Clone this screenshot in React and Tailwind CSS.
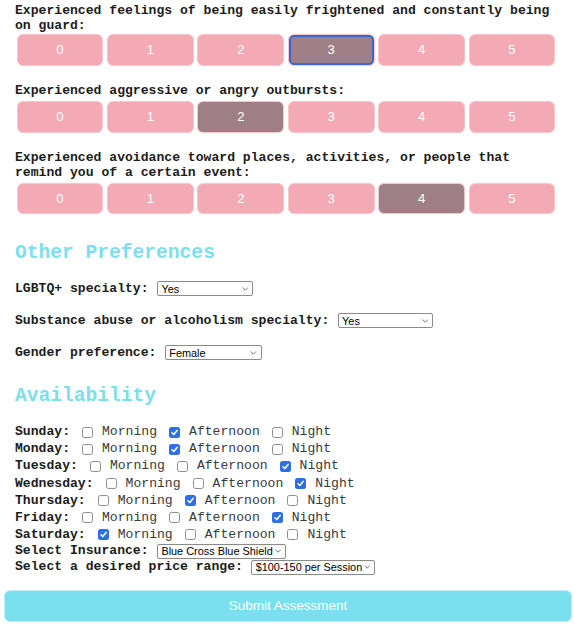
import React from "react";

const mono = { fontFamily: '"Liberation Mono", "Courier New", monospace' };

function Scale({ selected, focused }) {
  return (
    <div className="mx-[1.7px] grid grid-cols-6 gap-[3.8px]">
      {[0, 1, 2, 3, 4, 5].map((n) => (
        <div
          key={n}
          className={
            "flex h-[31.5px] items-center justify-center rounded-[6px] border border-[#f6c6cd] font-['Liberation_Sans',Arial,sans-serif] text-[13.1px] font-normal text-white " +
            (n === selected ? "bg-[#9e7f85] border-[#9e7f85] " : "bg-[#f3aab4] ") +
            (n === selected && focused ? "ring-2 ring-inset ring-[#3467cf] border-[#3467cf]" : "")
          }
        >
          {n}
        </div>
      ))}
    </div>
  );
}

function Box({ checked }) {
  return checked ? (
    <span className="ml-[12px] flex h-[11px] w-[11px] shrink-0 items-center justify-center rounded-[2.5px] bg-[#2f6fe4]">
      <svg viewBox="0 0 10 10" className="h-[9px] w-[9px]">
        <path d="M2.2 5.3 L4.2 7.3 L7.9 2.7" fill="none" stroke="white" strokeWidth="1.7" strokeLinecap="round" strokeLinejoin="round" />
      </svg>
    </span>
  ) : (
    <span className="ml-[12px] h-[11px] w-[11px] shrink-0 rounded-[2.5px] border border-[#8e8e8e] bg-white" />
  );
}

function Sel({ value, w }) {
  return (
    <span
      className={
        "ml-[8.3px] flex h-[15px] shrink-0 items-center justify-between rounded-[2px] border border-[#8a8a8a] bg-white pl-[3.5px] pr-[4px] font-['Liberation_Sans',Arial,sans-serif] text-[10.9px] font-normal text-black " +
        w
      }
    >
      <span className="whitespace-pre leading-none">{value}</span>
      <svg viewBox="0 0 8 5" className="ml-[2px] h-[4px] w-[6.5px] shrink-0">
        <path d="M0.7 0.7 L4 4 L7.3 0.7" fill="none" stroke="#555" strokeWidth="1" />
      </svg>
    </span>
  );
}

const days = [
  ["Sunday:", [false, true, false]],
  ["Monday:", [false, true, false]],
  ["Tuesday:", [false, false, true]],
  ["Wednesday:", [false, false, true]],
  ["Thursday:", [false, true, false]],
  ["Friday:", [false, false, true]],
  ["Saturday:", [true, false, false]],
];
const slots = ["Morning", "Afternoon", "Night"];

export default function App() {
  return (
    <div className="w-[574px] bg-white text-[#1c1c1c]" style={mono}>
      <div className="pl-[15px] pr-[17px]">
        <div className="pt-[2.5px] text-[13.1px] font-bold leading-[15px]">
          Experienced feelings of being easily frightened and constantly being on guard:
        </div>
        <div className="mt-[1.5px]">
          <Scale selected={3} focused />
        </div>

        <div className="mt-[17.5px] text-[13.1px] font-bold leading-[15px]">
          Experienced aggressive or angry outbursts:
        </div>
        <div className="mt-[3px]">
          <Scale selected={2} />
        </div>

        <div className="mt-[17px] text-[13.1px] font-bold leading-[15px]">
          Experienced avoidance toward places, activities, or people that remind you of a certain event:
        </div>
        <div className="mt-[3.2px]">
          <Scale selected={4} />
        </div>

        <div className="mt-[26.8px] h-[24px] text-[19.6px] font-bold leading-[24px] text-[#7bdfee]">
          Other Preferences
        </div>

        <div className="mt-[16px] flex h-[16px] items-center text-[13.1px] font-bold">
          <span className="whitespace-pre">LGBTQ+ specialty:</span>
          <Sel value="Yes" w="w-[96.5px]" />
        </div>
        <div className="mt-[16px] flex h-[16px] items-center text-[13.1px] font-bold">
          <span className="whitespace-pre">Substance abuse or alcoholism specialty:</span>
          <Sel value="Yes" w="w-[95.5px]" />
        </div>
        <div className="mt-[16px] flex h-[16px] items-center text-[13.1px] font-bold">
          <span className="whitespace-pre">Gender preference:</span>
          <Sel value="Female" w="w-[97px]" />
        </div>

        <div className="mt-[23px] h-[24px] text-[19.6px] font-bold leading-[24px] text-[#7bdfee]">
          Availability
        </div>

        <div className="mt-[15.5px] text-[13.1px]">
          {days.map(([d, c]) => (
            <div key={d} className="flex h-[17.1px] items-center">
              <span className="whitespace-pre font-bold">{d}</span>
              {slots.map((s, i) => (
                <React.Fragment key={s}>
                  <Box checked={c[i]} />
                  <span className="ml-[9px] whitespace-pre text-[#3a3a3a]">{s}</span>
                </React.Fragment>
              ))}
            </div>
          ))}
          <div className="flex h-[16px] items-center font-bold">
            <span className="whitespace-pre">Select Insurance:</span>
            <Sel value="Blue Cross Blue Shield" w="w-[129px]" />
          </div>
          <div className="flex h-[16px] items-center font-bold">
            <span className="whitespace-pre">Select a desired price range:</span>
            <Sel value="$100-150 per Session" w="w-[124px]" />
          </div>
        </div>
      </div>

      <div className="ml-[4px] mt-[15.3px] flex h-[32px] w-[568px] items-center justify-center rounded-[6px] border border-[#bfeff6] bg-[#7adfee] font-['Liberation_Sans',Arial,sans-serif] text-[13.5px] text-white">
        Submit Assessment
      </div>
    </div>
  );
}
